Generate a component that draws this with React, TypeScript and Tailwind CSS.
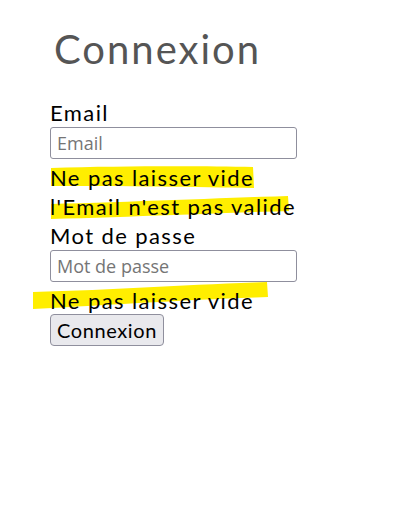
import React from 'react';

export default function App() {
    return (
        <div className="relative w-[403px] h-[505px] bg-white font-['Lato',sans-serif]">
            {/* highlighter strokes */}
            <svg className="absolute inset-0 pointer-events-none" width="403" height="505">
                <path d="M51 168 C120 166 200 166 253 167 L254 188 C200 187 120 186 51 186 Z" fill="#ffee00" />
                <path d="M51 204 C130 202 220 198 288 196 L289 211 C220 213 130 217 51 219 Z" fill="#ffee00" />
                <path d="M33 292 C110 290 200 284 267 282 L268 297 C200 299 110 305 33 309 Z" fill="#ffee00" />
            </svg>

            <div className="relative pl-[50px] pt-[24px]">
                <h1 className="ml-[4px] text-[40px] leading-[50px] tracking-[2px] text-[#555555] mb-[24px]">Connexion</h1>

                <form className="flex flex-col items-start text-[22px] leading-[29px] tracking-[1.4px] text-black">
                    <label>Email</label>
                    <input
                        type="text"
                        placeholder="Email"
                        className="w-[247px] h-[32px] px-[6px] rounded-[3px] border border-[#8f8f9d] font-['Open_Sans',sans-serif] text-[18px] tracking-normal placeholder:text-[#757575] mb-[4px]"
                    />
                    <span>Ne pas laisser vide</span>
                    <span>l'Email n'est pas valide</span>
                    <label>Mot de passe</label>
                    <input
                        type="password"
                        placeholder="Mot de passe"
                        className="w-[247px] h-[32px] px-[6px] rounded-[3px] border border-[#8f8f9d] font-['Open_Sans',sans-serif] text-[18px] tracking-normal placeholder:text-[#757575] mb-[4px]"
                    />
                    <span className="mb-[-1px]">Ne pas laisser vide</span>
                    <button
                        type="button"
                        className="w-[114px] h-[32px] rounded-[4px] border border-[#8f8f9d] bg-[#e9e9ed] text-[20px] tracking-[0.6px] leading-none"
                    >
                        Connexion
                    </button>
                </form>
            </div>
        </div>
    );
}
